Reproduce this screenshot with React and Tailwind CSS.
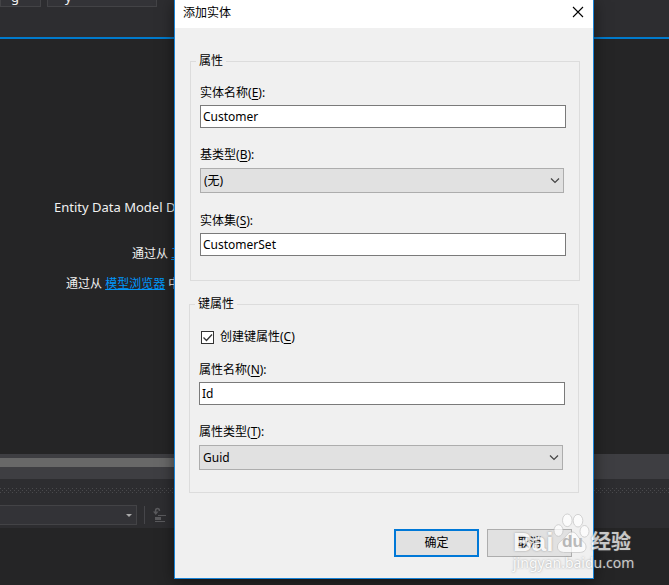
import React from "react";

const cjk = "font-['Noto_Sans','Noto_Sans_CJK_SC',sans-serif]";

function Key({ children }) {
  return <span className="underline underline-offset-2">{children}</span>;
}

function TextField({ id, label, hotkey, value }) {
  return (
    <div className="flex flex-col gap-1">
      <label htmlFor={id} className="text-[12px] leading-4">
        {label}(<Key>{hotkey}</Key>):
      </label>
      <input
        id={id}
        type="text"
        defaultValue={value}
        className="h-[23px] w-full border border-[#7a7a7a] bg-white px-[2px] text-[12px] outline-none"
      />
    </div>
  );
}

function SelectField({ id, label, hotkey, value }) {
  return (
    <div className="mr-[2px] mb-px flex flex-col gap-[5px]">
      <label htmlFor={id} className="text-[12px] leading-4">
        {label}(<Key>{hotkey}</Key>):
      </label>
      <div className="relative">
        <select
          id={id}
          className="block h-[25px] w-full appearance-none border border-[#adadad] bg-[#e1e1e1] px-[3px] text-[12px] outline-none"
        >
          <option>{value}</option>
        </select>
        <svg className="pointer-events-none absolute top-2 right-1" width="10" height="8" viewBox="0 0 10 8" fill="none" stroke="#444" strokeWidth="1.2">
          <path d="M1 2.500l4 4 4-4" />
        </svg>
      </div>
    </div>
  );
}

function Dots() {
  return (
    <svg className="block h-[5px] w-full" aria-hidden="true">
      <defs>
        <pattern id="grip" width="4" height="4" patternUnits="userSpaceOnUse">
          <rect x="0" y="0" width="1" height="1" fill="#4a4a4d" />
          <rect x="2" y="2" width="1" height="1" fill="#4a4a4d" />
        </pattern>
      </defs>
      <rect width="100%" height="5" fill="url(#grip)" />
    </svg>
  );
}

function Designer() {
  return (
    <div className="flex min-h-screen flex-col bg-[#252526] text-[#f1f1f1]">
      <div className="flex h-[39px] items-start gap-[6px] overflow-hidden border-b-2 border-[#007acc] bg-[#2d2d30] text-[13px]">
        <div className="flex h-[7px] w-[41px] items-end border border-t-0 border-[#434346] bg-[#333337] pb-[3px] pl-[10px] leading-[11px]">g</div>
        <div className="flex h-[7px] w-[110px] items-end border border-t-0 border-[#434346] bg-[#333337] pb-[3px] pl-[17px] leading-[11px]">y</div>
      </div>
      <div className="h-[415px] overflow-hidden whitespace-nowrap">
        <p className="mt-[160px] pl-[54px] text-[13px] leading-4">Entity Data Model D</p>
        <p className="mt-[31px] pl-[132px] text-[12px] leading-4">
          通过从 <a href="#toolbox" className="text-[#0097fb] underline">工</a>
        </p>
        <p className="mt-[14px] pl-[66px] text-[12px] leading-4">
          通过从 <a href="#browser" className="text-[#0097fb] underline">模型浏览器</a> 中
        </p>
      </div>
      <div className="h-[25px] bg-[#3e3e42] pt-1">
        <div className="h-[9px] w-1/3 bg-[#686868]" />
      </div>
      <div className="flex h-[49px] flex-col bg-[#2d2d30] pt-[9px]">
        <Dots />
        <div className="mt-3 flex items-center">
          <button type="button" aria-label="Output source" className="flex h-5 w-[137px] items-center justify-end border border-l-0 border-[#434346] bg-[#333337] pr-1">
            <svg width="6" height="3" viewBox="0 0 6 3" fill="#aaa"><path d="M0 0h6L3 3z" /></svg>
          </button>
          <div className="ml-[7px] h-[18px] w-px bg-[#46464a]" />
          <svg className="ml-2" width="14" height="16" viewBox="0 0 14 16" fill="none" stroke="#5a5a5d">
            <path d="M2.500 6V4q0-2.500 2-2.500T6.500 4" strokeWidth="1.500" />
            <path d="M0 4.500h5.500L2.800 8z" fill="#5a5a5d" stroke="none" />
            <path d="M5 8.500h8M2 14.500h10" />
            <path d="M2 10h6v3H2z" fill="#5a5a5d" stroke="none" />
          </svg>
        </div>
      </div>
    </div>
  );
}

function Watermark() {
  return (
    <div className="pointer-events-none absolute right-[36px] bottom-[14px] w-[120px] font-['Liberation_Sans','Noto_Sans_CJK_SC',sans-serif] whitespace-nowrap text-white opacity-75 select-none [text-shadow:0_0_2px_rgba(100,100,100,0.8)]">
      <div className="flex h-[42px] items-end">
        <span className="w-[39px] text-[26px] leading-[26px] font-bold">Bai</span>
        <div className="relative mb-[2px] h-10 w-[38px] shrink-0">
          <svg width="38" height="40" viewBox="0 0 38 40" fill="#fff" stroke="#bbb" strokeWidth="0.800">
            <ellipse cx="6.500" cy="17.500" rx="4.500" ry="5.800" />
            <ellipse cx="15.300" cy="7.300" rx="4.800" ry="6.300" />
            <ellipse cx="26" cy="7.700" rx="4.800" ry="6.300" />
            <ellipse cx="32.500" cy="18.300" rx="4.500" ry="5.800" />
            <path d="M20 19c4 0 5 4 8 7 3 2.500 6 4 6 8 0 4-3 5.500-7 5.500H13c-4 0-7.500-1.500-7.500-5.500 0-4 3-5.500 6-8 3-3 4.500-7 8.500-7z" />
          </svg>
          <span className="absolute bottom-[3px] left-[10px] text-[17px] leading-4 font-bold text-[#aaa] [text-shadow:none]">du</span>
        </div>
        <span className="ml-px text-[20px] leading-[26px] font-bold">经验</span>
      </div>
      <div className="font-['Noto_Sans',sans-serif] text-[14px] leading-4">jingyan.baidu.com</div>
    </div>
  );
}

export default function App() {
  return (
    <div className={`relative min-h-screen overflow-hidden text-black ${cjk}`}>
      <Designer />
      <div role="dialog" aria-labelledby="title" className="absolute top-0 right-[75px] left-[174px] flex flex-col border border-t-0 border-[#1883d7] bg-[#f0f0f0] shadow-[0_2px_14px_rgba(0,0,0,0.5)]">
        <header className="flex h-7 items-center justify-between bg-white pr-[9px] pb-[2px] pl-2">
          <h1 id="title" className="text-[12px] leading-4">添加实体</h1>
          <button type="button" aria-label="Close" className="pb-[2px]">
            <svg className="block" width="12" height="12" viewBox="0 0 12 12" stroke="#000" strokeWidth="1.100" fill="none"><path d="M1 1l10 10M11 1L1 11" /></svg>
          </button>
        </header>
        <form className="flex flex-col pt-[25px] pr-[13px] pb-[21px] pl-[14px]">
          <fieldset className="ml-px flex h-[228px] flex-col border border-[#dcdcdc] pr-[13px] pl-[9px]">
            <legend className="-ml-[4px] px-[3px] text-[12px] leading-4">属性</legend>
            <div className="flex flex-col gap-[19px] pt-4">
              <TextField id="entity" label="实体名称" hotkey="E" value="Customer" />
              <SelectField id="base" label="基类型" hotkey="B" value="(无)" />
              <TextField id="set" label="实体集" hotkey="S" value="CustomerSet" />
            </div>
          </fieldset>
          <fieldset className="mt-[15px] mr-px flex flex-col border border-[#dcdcdc] pr-[13px] pb-[21px] pl-[9px]">
            <legend className="-ml-[4px] px-[3px] text-[12px] leading-4">键属性</legend>
            <label className="mt-[17px] flex items-center gap-1.5 pl-[2px] text-[12px] leading-4">
              <span className="relative flex">
                <input type="checkbox" defaultChecked className="size-[13px] appearance-none border border-[#333] bg-white" />
                <svg className="pointer-events-none absolute inset-0" width="13" height="13" viewBox="0 0 13 13" fill="none" stroke="#333" strokeWidth="1.300"><path d="M2.500 6.500l3 3 5.500-6" /></svg>
              </span>
              <span>创建键属性(<Key>C</Key>)</span>
            </label>
            <div className="flex flex-col gap-[19px] pt-[17px]">
              <TextField id="prop" label="属性名称" hotkey="N" value="Id" />
              <SelectField id="type" label="属性类型" hotkey="T" value="Guid" />
            </div>
          </fieldset>
          <div className="mt-9 mr-2 flex justify-end gap-2 text-[12px]">
            <button type="submit" className="h-7 w-[85px] border-2 border-[#0078d7] bg-[#e1e1e1]">确定</button>
            <button type="button" className="h-7 w-[85px] border border-[#adadad] bg-[#e1e1e1]">取消</button>
          </div>
        </form>
      </div>
      <Watermark />
    </div>
  );
}
